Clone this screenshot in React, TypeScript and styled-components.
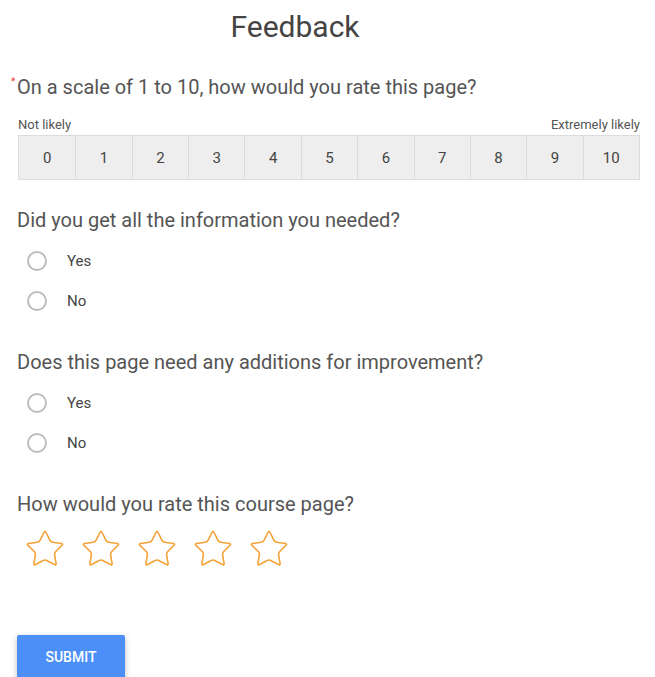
import React, { useState } from 'react';
import styled, { createGlobalStyle } from 'styled-components';
import { Star } from 'lucide-react';

const GlobalStyle = createGlobalStyle`
  body {
    margin: 0;
    background: #fff;
    font-family: Roboto, "Liberation Sans", Arial, sans-serif;
    overflow: hidden;
  }
`;

const Page = styled.div`
  padding: 10px 15px 0 17px;
  color: #555;
`;

const Title = styled.h1`
  width: 556px;
  margin: 0;
  font-size: 30px;
  line-height: 34px;
  font-weight: 400;
  color: #444;
  text-align: center;
`;

const Question = styled.div<{ $top: number }>`
  position: relative;
  margin-top: ${p => p.$top}px;
  font-size: 20px;
  line-height: 24px;
  color: #555;
`;

const Required = styled.span`
  position: absolute;
  left: -6px;
  top: 2px;
  font-size: 10px;
  line-height: 10px;
  color: #e53935;
`;

const ScaleLabels = styled.div`
  display: flex;
  justify-content: space-between;
  margin: 19px 0 0 1px;
  width: 622px;
  font-size: 13px;
  line-height: 14px;
  color: #555;
`;

const ScaleRow = styled.div`
  box-sizing: border-box;
  display: grid;
  grid-template-columns: repeat(11, 1fr);
  margin: 3px 0 0 1px;
  width: 622px;
  border: 1px solid #dcdcdc;
  background: #eee;
`;

const ScaleCell = styled.button<{ $active: boolean }>`
  height: 43px;
  border: none;
  border-left: 1px solid #dcdcdc;
  background: ${p => (p.$active ? '#dfe9fb' : 'transparent')};
  font-family: inherit;
  font-size: 15px;
  color: #444;
  cursor: pointer;
  padding: 0;

  &:first-child {
    border-left: none;
  }
`;

const Options = styled.div`
  margin-top: 9px;
`;

const OptionRow = styled.label`
  display: flex;
  align-items: center;
  height: 40px;
  padding-left: 10px;
  font-size: 15px;
  color: #444;
  cursor: pointer;
`;

const RadioCircle = styled.span<{ $checked: boolean }>`
  box-sizing: border-box;
  width: 20px;
  height: 20px;
  margin-right: 20px;
  border-radius: 50%;
  border: 2px solid ${p => (p.$checked ? '#4b8ff7' : '#bdbdbd')};
  box-shadow: ${p => (p.$checked ? 'inset 0 0 0 3px #fff, inset 0 0 0 10px #4b8ff7' : 'none')};
`;

const Stars = styled.div`
  display: flex;
  gap: 14px;
  margin: 12px 0 0 7px;
  height: 42px;
`;

const StarButton = styled.button`
  border: none;
  background: none;
  padding: 0;
  width: 42px;
  height: 42px;
  cursor: pointer;
  color: #f5a23a;
`;

const SubmitButton = styled.button`
  display: block;
  margin-top: 65px;
  width: 108px;
  height: 44px;
  border: none;
  border-radius: 2px;
  background: #4b8ff7;
  color: #fff;
  font-family: inherit;
  font-size: 14px;
  font-weight: 500;
  box-shadow: 0 2px 6px rgba(0, 0, 0, 0.25);
  cursor: pointer;
`;

function RadioGroup({ value, onChange }: { value: string; onChange: (v: string) => void }) {
  return (
    <Options>
      {['Yes', 'No'].map(opt => (
        <OptionRow key={opt} onClick={() => onChange(opt)}>
          <RadioCircle $checked={value === opt} />
          {opt}
        </OptionRow>
      ))}
    </Options>
  );
}

export default function App() {
  const [score, setScore] = useState<number | null>(null);
  const [info, setInfo] = useState('');
  const [additions, setAdditions] = useState('');
  const [stars, setStars] = useState(0);

  return (
    <Page>
      <GlobalStyle />
      <Title>Feedback</Title>

      <Question $top={31}>
        <Required>*</Required>
        On a scale of 1 to 10, how would you rate this page?
      </Question>
      <ScaleLabels>
        <span>Not likely</span>
        <span>Extremely likely</span>
      </ScaleLabels>
      <ScaleRow>
        {Array.from({ length: 11 }, (_, i) => (
          <ScaleCell key={i} $active={score === i} onClick={() => setScore(i)}>
            {i}
          </ScaleCell>
        ))}
      </ScaleRow>

      <Question $top={28}>Did you get all the information you needed?</Question>
      <RadioGroup value={info} onChange={setInfo} />

      <Question $top={29}>Does this page need any additions for improvement?</Question>
      <RadioGroup value={additions} onChange={setAdditions} />

      <Question $top={29}>How would you rate this course page?</Question>
      <Stars>
        {[1, 2, 3, 4, 5].map(n => (
          <StarButton key={n} onClick={() => setStars(n)}>
            <Star
              size={42}
              strokeWidth={1.6}
              absoluteStrokeWidth
              fill={n <= stars ? '#f5a23a' : 'none'}
            />
          </StarButton>
        ))}
      </Stars>

      <SubmitButton>SUBMIT</SubmitButton>
    </Page>
  );
}
